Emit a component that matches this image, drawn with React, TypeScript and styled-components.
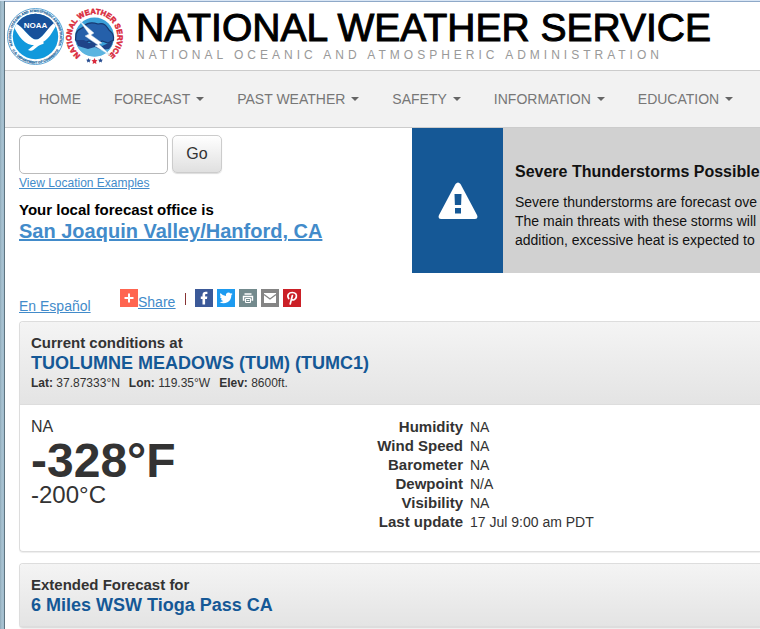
import React from "react";
import styled, { createGlobalStyle } from "styled-components";

const GlobalStyle = createGlobalStyle`
  *, *::before, *::after { box-sizing: border-box; }
  html { background: #fff; }
  body {
    margin: 0;
    overflow: hidden;
    font-family: "Liberation Sans", Arial, Helvetica, sans-serif;
    font-size: 14px;
    line-height: 19px;
    color: #333;
  }
  h1, h2, h3, p, dl, dd, ul { margin: 0; padding: 0; }
`;

const Frame = styled.div`
  display: flex;
  min-height: 100vh;
  border-top: 1px solid #d9e6f5;
`;

const WindowEdge = styled.div`
  flex: none;
  width: 5px;
  background: linear-gradient(to right, #8ea9b8 0, #a9c3d2 2px, #9fbccd 4px, #5f7480 4px);
`;

const Page = styled.div`
  flex: 1;
  min-width: 0;
  border-top: 1px solid #8fa9c8;
`;

const Header = styled.header`
  display: flex;
  align-items: flex-start;
  height: 68px;
  padding: 5px 0 0 1px;
`;

const Logos = styled.div`
  display: flex;
  flex: none;
  width: 127px;
`;

const Brand = styled.div`
  padding: 1px 0 0 3px;
  white-space: nowrap;
`;

const BrandTitle = styled.h1`
  font-size: 39px;
  line-height: 40px;
  font-weight: 400;
  color: #000;
  -webkit-text-stroke: 1px #000;
`;

const BrandSub = styled.p`
  font-size: 12px;
  line-height: 14px;
  letter-spacing: 4px;
  color: #999;
`;

const Nav = styled.nav`
  display: flex;
  align-items: center;
  gap: 33px;
  height: 58px;
  padding-left: 34px;
  background: #f2f2f2;
  border-top: 1px solid #ccc;
  border-bottom: 1px solid #ccc;
  white-space: nowrap;
`;

const NavLink = styled.a`
  display: flex;
  align-items: center;
  gap: 6px;
  color: #777;
  text-decoration: none;
`;

const Caret = styled.span`
  border: 4px solid transparent;
  border-top-color: #666;
  border-bottom-width: 0;
`;

const Intro = styled.section`
  display: grid;
  grid-template-columns: 393px minmax(0, 1fr);
  padding-left: 14px;
`;

const SearchRow = styled.form`
  display: flex;
  gap: 4px;
  padding-top: 7px;
`;

const SearchInput = styled.input`
  width: 149px;
  height: 39px;
  border: 1px solid #bbb;
  border-radius: 5px;
  padding: 0 8px;
  background: #fff;
  font: inherit;
`;

const GoButton = styled.button`
  width: 50px;
  height: 38px;
  border: 1px solid #ccc;
  border-radius: 5px;
  background: linear-gradient(#fff, #e0e0e0);
  box-shadow: 0 1px 1px #ddd;
  color: #333;
  font-family: inherit;
  font-size: 16px;
`;

const Link = styled.a<{ $small?: boolean }>`
  display: table;
  color: #428bca;
  font-size: ${(p) => (p.$small ? 12 : 14)}px;
  line-height: ${(p) => (p.$small ? 18 : 19)}px;
`;

const OfficeLabel = styled.p`
  padding-top: 8px;
  font-size: 15px;
  line-height: 20px;
  font-weight: 700;
  color: #000;
`;

const OfficeLink = styled.a`
  display: inline-block;
  font-size: 20px;
  line-height: 22px;
  font-weight: 700;
  color: #428bca;
`;

const Alert = styled.aside`
  display: flex;
  height: 145px;
  background: #d1d1d1;
  overflow: hidden;
`;

const AlertIcon = styled.div`
  display: flex;
  align-items: center;
  justify-content: center;
  flex: none;
  width: 91px;
  background: #155896;
`;

const AlertText = styled.div`
  padding: 34px 0 0 12px;
  white-space: nowrap;
  color: #111;
`;

const AlertTitle = styled.h2`
  font-size: 16px;
  line-height: 20px;
  margin-bottom: 11px;
`;

const ShareBar = styled.div`
  display: flex;
  align-items: flex-start;
  height: 48px;
  padding: 16px 0 0 14px;
`;

const Espanol = styled.div`
  width: 101px;
  padding-top: 8px;
`;

const ShareLink = styled.a`
  display: flex;
  align-items: flex-start;
  color: #428bca;
  span { padding-top: 4px; text-decoration: underline; }
`;

const Divider = styled.span`
  width: 1px;
  height: 12px;
  margin: 4px 9px 0 10px;
  background: #833;
`;

const Socials = styled.div`
  display: flex;
  gap: 4px;
`;

const SocialButton = styled.button<{ $color: string }>`
  display: flex;
  width: 18px;
  height: 18px;
  padding: 0;
  border: 0;
  background: ${(p) => p.$color};
`;

const Panels = styled.main`
  display: flex;
  flex-direction: column;
  gap: 11px;
  padding-left: 14px;
`;

const Panel = styled.section`
  border: 1px solid #ddd;
  border-right: 0;
  border-radius: 4px 0 0 4px;
  box-shadow: 0 1px 1px #eee;
`;

const PanelHead = styled.div`
  padding: 11px;
  border-bottom: 1px solid #ddd;
  border-radius: 4px 0 0 0;
  background: linear-gradient(#f4f4f4, #e4e4e4);
`;

const PanelLabel = styled.p`
  font-size: 15px;
  line-height: 20px;
  font-weight: 700;
`;

const PanelTitle = styled.h2`
  font-size: 18px;
  line-height: 20px;
  color: #155896;
`;

const Coordinates = styled.p`
  display: flex;
  gap: 9px;
  font-size: 12px;
  line-height: 20px;
`;

const PanelBody = styled.div`
  display: grid;
  grid-template-columns: 338px minmax(0, 1fr);
  min-height: 146px;
  padding: 12px 11px;
`;

const Condition = styled.p`
  font-size: 16px;
  line-height: 20px;
`;

const Fahrenheit = styled.p`
  font-size: 48px;
  line-height: 48px;
  font-weight: 700;
`;

const Celsius = styled.p`
  font-size: 24px;
  line-height: 20px;
`;

const Readings = styled.table`
  justify-self: start;
  align-self: start;
  border-collapse: collapse;
  th, td { padding: 1px 0 0; line-height: 18px; vertical-align: baseline; }
  th { text-align: right; width: 94px; white-space: nowrap; font-size: 15px; }
  td { padding-left: 7px; font-size: 14px; }
`;

function NoaaLogo() {
  return (
    <svg width="58" height="60" viewBox="0 0 58 60" role="img" aria-label="NOAA">
      <defs>
        <clipPath id="noaa-disc"><circle cx="29.500" cy="29.500" r="22.700" /></clipPath>
        <path id="noaa-top" d="M8.300 41.700A24.500 24.500 0 1 1 50.700 41.700" />
        <path id="noaa-bottom" d="M5 40.900A27 27 0 0 0 54 40.900" />
      </defs>
      <circle cx="29.500" cy="29.500" r="28" fill="#fff" stroke="#5fa5d4" strokeWidth="1" />
      <g fill="#23699f" stroke="#23699f" strokeWidth=".2" fontSize="3.300" fontWeight="700" textAnchor="middle">
        <text><textPath href="#noaa-top" startOffset="50%">NATIONAL OCEANIC AND ATMOSPHERIC ADMINISTRATION</textPath></text>
        <text><textPath href="#noaa-bottom" startOffset="50%">U.S. DEPARTMENT OF COMMERCE</textPath></text>
      </g>
      <g clipPath="url(#noaa-disc)">
        <rect width="58" height="60" fill="#1199dc" />
        <path d="M8 0H52V16C45 18 40 26 34 31Q30 34 26 31C20 26 15 18 8 16Z" fill="#17519b" />
        <path d="M5 15C15 16 19 26 26 31Q30 34 34 31C41 26 44 16 54 13C49 19 45 31 37 35C40 37 34 37 31 40C27 43 26 45 22 43L28 38C16 38 11 25 5 15Z" fill="#fff" />
      </g>
      <text x="29.500" y="21" textAnchor="middle" fontSize="8" fontWeight="700" fill="#fff">NOAA</text>
    </svg>
  );
}

function NwsLogo() {
  return (
    <svg width="62" height="60" viewBox="0 0 62 60" role="img" aria-label="National Weather Service">
      <defs>
        <path id="nws-ring" d="M20.500 50.700A23 23 0 1 1 40.500 50.700" />
      </defs>
      <text fontSize="7.600" fontWeight="700" fill="#d92a3c" stroke="#d92a3c" strokeWidth=".5">
        <textPath href="#nws-ring" startOffset="50%" textAnchor="middle">NATIONAL WEATHER SERVICE</textPath>
      </text>
      <circle cx="30.500" cy="30" r="19.500" fill="#3aa0d8" />
      <path d="M12 27C14 20 18 23 20 19C25 14 31 16 34 17C41 15 43 20 45 23C49 26 50 30 49.500 33L44 36L38 34L34 38L25 34L18 37L11.500 33Z" fill="#2560aa" stroke="#183a72" strokeWidth="1.200" />
      <path d="M11.500 34L20 35L25 38L31 36L38 41L49 36C47 43 41 49.500 30.500 49.500C20.500 49.500 14 44 11.500 34Z" fill="#5cb4e0" />
      <path d="M11.500 33L20 33L25 36L31 34L38 39L49 34Q48 39 45 42L37 43L31 40L24 42L14 39Z" fill="#1f4488" />
      <path d="M15 13L30 26L27 28L38 36L35 37L47 49L31 39L34 38L21 29L25 27Z" fill="#fff" stroke="#b7d5ea" strokeWidth=".5" />
      <path d="M30.500 51l1 2 2 .3-1.500 1.500.4 2.200-1.900-1-1.900 1 .4-2.200-1.500-1.500 2-.3z" fill="#d92a3c" />
      <g fill="#294e91">
        <path d="M24.500 51l.7 1.500 1.700.2-1.200 1.200.3 1.600-1.500-.8-1.500.8.3-1.600-1.200-1.200 1.700-.2z" />
        <path d="M36.500 51l.7 1.500 1.700.2-1.200 1.200.3 1.600-1.500-.8-1.500.8.3-1.600-1.200-1.200 1.700-.2z" />
      </g>
    </svg>
  );
}

const WarningIcon = () => (
  <svg width="40" height="38" viewBox="0 0 40 38" aria-hidden="true">
    <path d="M17.500 2Q20 -1 22.500 2L39 33Q40.500 37 37 37H3Q-.5 37 1 33Z" fill="#fff" />
    <path d="M16.500 12h7l-.4 11h-6.200zM17 26h6v5.500h-6z" fill="#155896" />
  </svg>
);

const PlusIcon = () => (
  <svg width="18" height="18" viewBox="0 0 18 18" aria-hidden="true">
    <rect width="18" height="18" fill="#ff6550" />
    <path d="M8 4.500h2V8h3.500v2H10v3.500H8V10H4.500V8H8z" fill="#fff" />
  </svg>
);

const socials = [
  { name: "Facebook", color: "#3b5998", icon: <path fill="#fff" d="M7.500 15.500V10H5.800V7.500h1.700V6C7.500 3.800 8.700 2.800 10.700 2.800h1.700v2.300h-1.200c-.9 0-1.100.4-1.100 1.200v1.200h2.200L12 10h-1.900v5.500z" /> },
  { name: "Twitter", color: "#1d9bf0", icon: <path transform="translate(2.500 2.300) scale(.55)" fill="#fff" d="M23.900 4.600a10 10 0 0 1-2.800.8 5 5 0 0 0 2.100-2.700 10 10 0 0 1-3.100 1.200 4.900 4.900 0 0 0-8.400 4.500A14 14 0 0 1 1.600 3.200a4.900 4.900 0 0 0 1.500 6.500 5 5 0 0 1-2.200-.6c0 2.300 1.600 4.400 4 4.900a5 5 0 0 1-2.300.1 4.900 4.900 0 0 0 4.600 3.400A10 10 0 0 1 0 19.500a14 14 0 0 0 21.500-12.400 10 10 0 0 0 2.400-2.500z" /> },
  { name: "Print", color: "#738a8d", icon: <><path fill="none" stroke="#fff" strokeWidth="1.400" d="M5.500 5h7M5.500 11H4.500V7.500h9V11h-1" /><path fill="none" stroke="#fff" d="M6.500 9.500h5V13.500h-5zM7.500 11.500h3" /></> },
  { name: "Email", color: "#848484", icon: <><rect x="3" y="4" width="12" height="10" fill="#fff" /><path d="M3 5.500l6 4.500 6-4.500" fill="none" stroke="#848484" strokeWidth="1.300" /></> },
  { name: "Pinterest", color: "#cb2027", icon: <path fill="none" stroke="#fff" strokeWidth="1.700" strokeLinecap="round" d="M5.700 9.500C3.500 6.200 6 3.500 9.300 3.500c3.200 0 4.500 2 4 4.500-.5 2.600-3.800 4.200-4.800 1.800M9.400 6.500L7.200 15" /> },
];

const menu = ["HOME", "FORECAST", "PAST WEATHER", "SAFETY", "INFORMATION", "EDUCATION"];

const readings = [
  ["Humidity", "NA"],
  ["Wind Speed", "NA"],
  ["Barometer", "NA"],
  ["Dewpoint", "N/A"],
  ["Visibility", "NA"],
  ["Last update", "17 Jul 9:00 am PDT"],
];

export default function App() {
  return (
    <>
      <GlobalStyle />
      <Frame>
        <WindowEdge />
        <Page>
          <Header>
            <Logos><NoaaLogo /><NwsLogo /></Logos>
            <Brand>
              <BrandTitle>NATIONAL WEATHER SERVICE</BrandTitle>
              <BrandSub>NATIONAL OCEANIC AND ATMOSPHERIC ADMINISTRATION</BrandSub>
            </Brand>
          </Header>
          <Nav>
            {menu.map((item, i) => (
              <NavLink key={item} href="#">{item}{i > 0 && <Caret />}</NavLink>
            ))}
          </Nav>
          <Intro>
            <div>
              <SearchRow onSubmit={(e) => e.preventDefault()}>
                <SearchInput type="text" aria-label="Location" />
                <GoButton type="submit">Go</GoButton>
              </SearchRow>
              <Link $small href="#">View Location Examples</Link>
              <OfficeLabel>Your local forecast office is</OfficeLabel>
              <OfficeLink href="#">San Joaquin Valley/Hanford, CA</OfficeLink>
            </div>
            <Alert>
              <AlertIcon><WarningIcon /></AlertIcon>
              <AlertText>
                <AlertTitle>Severe Thunderstorms Possible</AlertTitle>
                <p>Severe thunderstorms are forecast ove</p>
                <p>The main threats with these storms will</p>
                <p>addition, excessive heat is expected to</p>
              </AlertText>
            </Alert>
          </Intro>
          <ShareBar>
            <Espanol><Link href="#">En Español</Link></Espanol>
            <ShareLink href="#"><PlusIcon /><span>Share</span></ShareLink>
            <Divider />
            <Socials>
              {socials.map((s) => (
                <SocialButton key={s.name} $color={s.color} aria-label={s.name}>
                  <svg width="18" height="18" viewBox="0 0 18 18" aria-hidden="true">{s.icon}</svg>
                </SocialButton>
              ))}
            </Socials>
          </ShareBar>
          <Panels>
            <Panel>
              <PanelHead>
                <PanelLabel>Current conditions at</PanelLabel>
                <PanelTitle>TUOLUMNE MEADOWS (TUM) (TUMC1)</PanelTitle>
                <Coordinates>
                  <span><b>Lat:</b> 37.87333°N</span>
                  <span><b>Lon:</b> 119.35°W</span>
                  <span><b>Elev:</b> 8600ft.</span>
                </Coordinates>
              </PanelHead>
              <PanelBody>
                <div>
                  <Condition>NA</Condition>
                  <Fahrenheit>-328°F</Fahrenheit>
                  <Celsius>-200°C</Celsius>
                </div>
                <Readings>
                  <tbody>
                    {readings.map(([label, value]) => (
                      <tr key={label}><th scope="row">{label}</th><td>{value}</td></tr>
                    ))}
                  </tbody>
                </Readings>
              </PanelBody>
            </Panel>
            <Panel>
              <PanelHead>
                <PanelLabel>Extended Forecast for</PanelLabel>
                <PanelTitle>6 Miles WSW Tioga Pass CA</PanelTitle>
              </PanelHead>
            </Panel>
          </Panels>
        </Page>
      </Frame>
    </>
  );
}
